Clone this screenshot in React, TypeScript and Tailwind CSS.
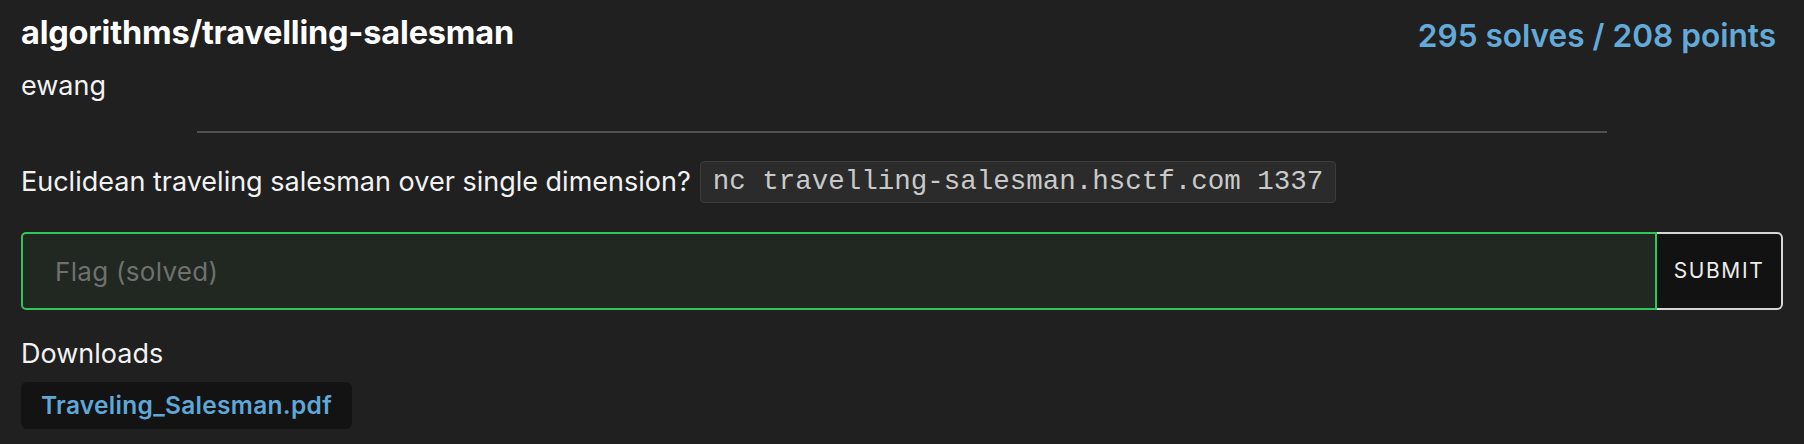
import React from "react";

const sans = "font-['Inter','Noto_Sans',sans-serif]";

export default function App() {
  return (
    <div className={`min-h-[444px] w-full bg-[#202020] px-[21px] pt-[14px] text-white ${sans}`}>
      {/* Header */}
      <div className="flex items-start justify-between">
        <h1 className="text-[32.5px] font-bold leading-[38px] tracking-[-0.2px]">algorithms/travelling-salesman</h1>
        <div className="pr-[7px] pt-[3px] text-[31.6px] font-semibold leading-[38px] text-[#64aad9]">295 solves / 208 points</div>
      </div>
      <div className="mt-[14px] text-[27px] leading-[34px] text-[#f2f2f2]">ewang</div>

      <div className="mx-auto mt-[28px] h-[2px] w-[80%] bg-[#505050]" />

      {/* Description */}
      <div className="mt-[28px] flex items-center gap-[9px]">
        <span className="text-[27px] leading-[34px] text-[#f2f2f2]">Euclidean traveling salesman over single dimension?</span>
        <code className="rounded-[4px] border border-[#3c3c3c] bg-[#2b2b2b] px-[12px] py-[2px] font-['Liberation_Mono',monospace] text-[27.5px] leading-[36px] text-[#c9c9c9]">
          nc travelling-salesman.hsctf.com 1337
        </code>
      </div>

      {/* Flag form */}
      <div className="mt-[29px] flex h-[78px]">
        <input
          disabled
          placeholder="Flag (solved)"
          className="h-full flex-1 rounded-l-[5px] border-2 border-[#2fc65a] bg-[#212721] pl-[32px] text-[26px] tracking-[0.3px] text-white outline-none placeholder:text-[#6e716e]"
        />
        <button className="h-full w-[126px] rounded-r-[6px] border-2 border-l-0 border-[#d6d6d6] bg-[#121212] text-[21px] tracking-[1.6px] text-[#ececec]">
          SUBMIT
        </button>
      </div>

      {/* Downloads */}
      <div className="mt-[27px] text-[27px] leading-[34px] text-[#f2f2f2]">Downloads</div>
      <div className="mt-[11px] flex">
        <a className="flex h-[47px] items-center rounded-[6px] bg-[#131313] px-[20px] text-[24.5px] font-semibold tracking-[0.3px] text-[#5fa7d7]">
          Traveling_Salesman.pdf
        </a>
      </div>
    </div>
  );
}
